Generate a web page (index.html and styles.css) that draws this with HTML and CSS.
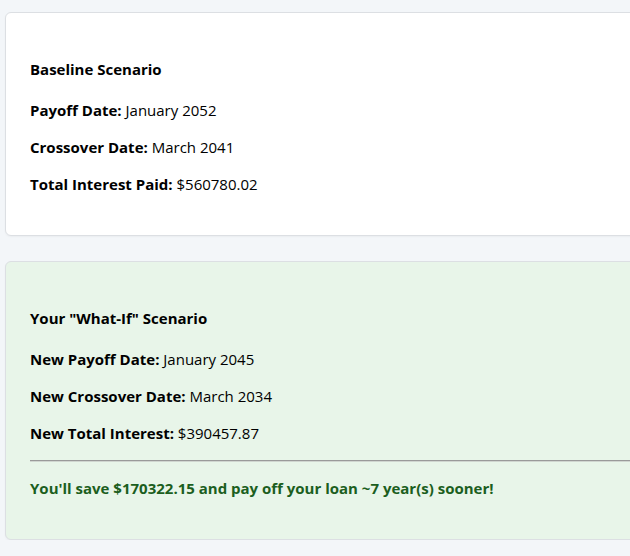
FILE: index.html
```html
<!DOCTYPE html>
<html>
<head>
<meta charset="utf-8">
<link rel="stylesheet" href="styles.css">
</head>
<body>
<div class="page">
  <section class="card">
    <h4 class="card-title">Baseline Scenario</h4>
    <p class="row"><strong>Payoff Date:</strong> January 2052</p>
    <p class="row"><strong>Crossover Date:</strong> March 2041</p>
    <p class="row"><strong>Total Interest Paid:</strong> $560780.02</p>
  </section>
  <section class="card card-whatif">
    <h4 class="card-title">Your "What-If" Scenario</h4>
    <p class="row"><strong>New Payoff Date:</strong> January 2045</p>
    <p class="row"><strong>New Crossover Date:</strong> March 2034</p>
    <p class="row"><strong>New Total Interest:</strong> $390457.87</p>
    <hr class="divider">
    <p class="row savings">You'll save $170322.15 and pay off your loan ~7 year(s) sooner!</p>
  </section>
</div>
</body>
</html>
```
FILE: styles.css
```css
html, body {
  margin: 0;
  padding: 0;
  background: #f3f6f9;
  overflow: hidden;
}
body {
  font-family: "Open Sans", "Noto Sans", sans-serif;
  font-size: 15px;
  line-height: 21px;
  color: #000;
}
.page {
  display: flex;
  flex-direction: column;
  gap: 25px;
  padding: 12px 0 0 5px;
  width: 680px;
}
.card {
  background: #fff;
  border: 1px solid #dcdfe3;
  border-radius: 6px;
  padding: 24px;
  box-shadow: 0 1px 2px rgba(0,0,0,0.04);
}
.card-whatif {
  background: #e8f5e9;
}
.card-title {
  font-size: 15px;
  font-weight: 700;
  margin: 22px 0 20px;
}
.row {
  margin: 16px 0;
}
.row strong {
  font-weight: 700;
}
.divider {
  border: 0;
  border-top: 1px solid #9a9a9a;
  border-bottom: 1px solid #d0d6d0;
  margin: 15px 0;
}
.savings {
  color: #1b5e20;
  font-weight: 700;
  margin-top: 16px;
  margin-bottom: 16px;
}
```
